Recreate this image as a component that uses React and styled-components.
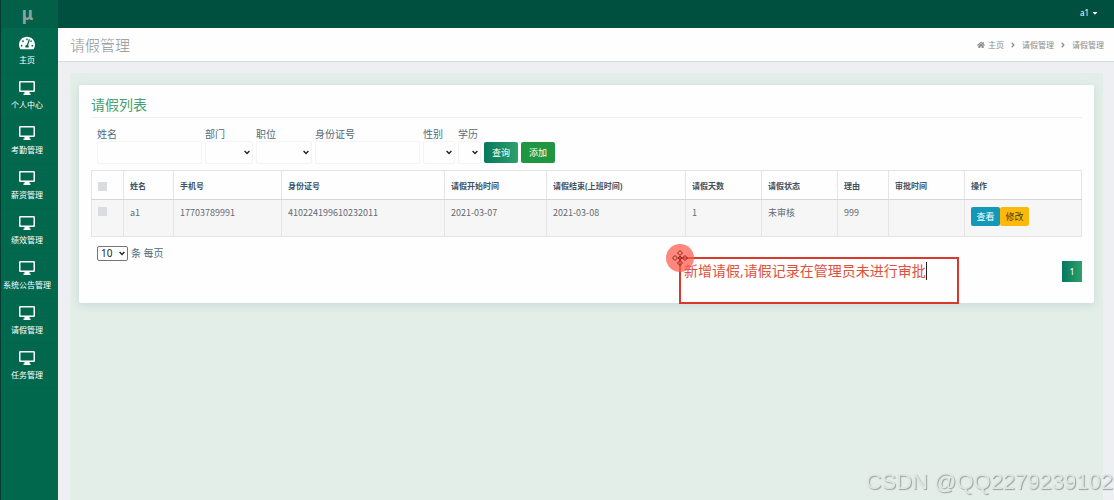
import React from "react";
import styled, { createGlobalStyle, css } from "styled-components";
import { FaTachometerAlt, FaHome, FaAngleRight, FaCaretDown } from "react-icons/fa";

const GlobalStyle = createGlobalStyle`
  * { box-sizing: border-box; }
  html, body, #root { min-height: 100vh; }
  body {
    margin: 0;
    background: #edeff2;
    color: #56697a;
    font-family: "Noto Sans", "Noto Sans CJK SC", sans-serif;
    font-size: 9px;
    line-height: 12px;
    overflow: hidden;
  }
  button, input, select { font: inherit; color: inherit; margin: 0; }
  a { color: inherit; text-decoration: none; }
`;

const Shell = styled.div`
  display: grid;
  grid-template-columns: 58px minmax(0, 1fr);
  height: 100vh;
`;

const Sidebar = styled.aside`
  background: #02684d;
  border-left: 1px solid #063d30;
  color: #fff;
`;

const Logo = styled.a`
  display: block;
  height: 28px;
  padding-right: 4px;
  background: #025f48;
  color: #8fa39b;
  font-size: 17px;
  font-weight: 700;
  line-height: 28px;
  text-align: center;
`;

const Menu = styled.ul`
  list-style: none;
  margin: 0;
  padding: 1px 0 0;
`;

const MenuLink = styled.a`
  display: flex;
  flex-direction: column;
  align-items: center;
  height: 45px;
  padding: 6px 5px 0 0;
  border-bottom: 1px solid #05634a;
  font-size: 8px;
  line-height: 12px;
  white-space: nowrap;

  svg { width: 16px; height: 16px; margin-bottom: 3px; }
`;

const Main = styled.div`
  display: flex;
  flex-direction: column;
  min-width: 0;
`;

const TopBar = styled.header`
  display: flex;
  justify-content: flex-end;
  align-items: center;
  flex: none;
  height: 28px;
  padding: 0 15px 2px 0;
  background: #00503f;
`;

const UserButton = styled.button`
  display: flex;
  align-items: center;
  gap: 2px;
  padding: 0;
  border: 0;
  background: none;
  color: #fff;
  font-size: 8px;
  line-height: 12px;
`;

const TitleBar = styled.div`
  display: flex;
  justify-content: space-between;
  align-items: center;
  flex: none;
  height: 34px;
  padding: 0 10px 0 12px;
  background: #fdfefd;
  border-bottom: 1px solid #d8dbde;
`;

const PageTitle = styled.h1`
  margin: 0;
  color: #929595;
  font-size: 15px;
  font-weight: 300;
  line-height: 20px;
`;

const Crumbs = styled.nav`
  display: flex;
  align-items: center;
  gap: 7px;
  color: #8b8d8e;
  font-size: 8px;

  a { display: flex; align-items: center; gap: 3px; }
  > svg { width: 4px; }
`;

const Content = styled.main`
  flex: 1;
  margin: 11px 11px 0 12px;
  padding: 12px 9px 0;
  background: #e3eee8;
`;

const Card = styled.section`
  position: relative;
  padding: 12px 12px 21px;
  border-radius: 2px;
  background: #fdfefd;
  box-shadow: 0 2px 8px rgba(90, 140, 150, 0.2);
`;

const CardTitle = styled.h2`
  margin: 0 0 9px;
  padding-bottom: 4px;
  border-bottom: 1px solid #eeefef;
  color: #46a074;
  font-size: 14px;
  font-weight: 400;
  line-height: 16px;
`;

const Filters = styled.form`
  display: flex;
  align-items: flex-end;
  gap: 3px;
  margin-bottom: 6px;
  padding-left: 6px;
`;

const Field = styled.label`
  display: flex;
  flex-direction: column;
  width: ${(p) => p.$width}px;
  font-size: 10px;
  line-height: 14px;
  white-space: nowrap;
`;

const control = css`
  width: 100%;
  height: 23px;
  border: 1px solid #f3f4f4;
  border-radius: 2px;
  background: #fdfefd;
`;

const TextInput = styled.input`
  ${control}
  padding: 0 4px;
`;

const SelectWrap = styled.span`
  display: grid;
  align-items: center;
  justify-items: end;

  > * { grid-area: 1 / 1; }
  svg { width: 6px; height: 5px; margin-right: 3px; pointer-events: none; }
`;

const SelectBox = styled.select`
  ${control}
  appearance: none;
  padding: 0 4px;
`;

const PageSelect = styled.select`
  appearance: none;
  width: 31px;
  height: 15px;
  padding: 0 3px;
  border: 1px solid #767676;
  border-radius: 2px;
  background: #fff;
  color: #222;
  font-size: 10px;
  line-height: 13px;
`;

const Button = styled.button`
  height: 21px;
  width: 34px;
  margin: 0 0 1px;
  padding: 0;
  border: 0;
  border-radius: 2px;
  background: ${(p) => (p.$primary ? "linear-gradient(90deg, #04795c, #2f9f6c)" : "#1f9742")};
  color: #fff;
`;

const Table = styled.table`
  width: 100%;
  border-collapse: collapse;
  table-layout: fixed;

  th, td {
    padding: 0 6px;
    border: 1px solid #e3e5e7;
    text-align: left;
    white-space: nowrap;
  }
  th {
    height: 29px;
    padding-top: 2px;
    border-bottom-color: #d3d6d9;
    color: #3f5363;
    font-size: 8px;
    font-weight: 700;
  }
  td {
    height: 37px;
    padding-top: 7px;
    vertical-align: top;
    color: #626b72;
    background: #f6f6f6;
    font-family: "Noto Sans CJK SC", sans-serif;
  }
`;

const Tick = styled.input`
  appearance: none;
  display: block;
  width: 9px;
  height: 9px;
  background: #dadce2;
`;

const Actions = styled.div`
  display: flex;
`;

const RowButton = styled.button`
  width: 29px;
  height: 19px;
  padding: 0;
  border: 0;
  border-radius: 2px;
  background: ${(p) => (p.$edit ? "#fdb90b" : "#1498b8")};
  color: ${(p) => (p.$edit ? "#4b3c12" : "#fff")};
`;

const Footer = styled.div`
  display: flex;
  justify-content: space-between;
  align-items: flex-start;
  padding: 8px 0 0 6px;
`;

const PageSize = styled.label`
  display: flex;
  align-items: center;
  gap: 3px;
  font-size: 10px;
  line-height: 16px;
`;

const PageButton = styled.button`
  width: 20px;
  height: 21px;
  margin-top: 16px;
  padding: 0;
  border: 0;
  background: linear-gradient(90deg, #04795c, #2f9f6c);
  color: #fff;
`;

const Note = styled.div`
  position: absolute;
  top: 172px;
  right: 135px;
  width: 280px;
  height: 47px;
  padding: 2px 0 0 3px;
  border: 2px solid #d8392c;
  color: #e0503c;
  font-size: 14px;
  line-height: 20px;
  white-space: nowrap;

  span { display: inline-block; height: 18px; border-right: 1px solid #222; line-height: 18px; }
  svg { position: absolute; top: -16px; left: -16px; }
`;

const Watermark = styled.div`
  position: fixed;
  right: 1px;
  bottom: 5px;
  color: #dfe6e3;
  font-family: "Liberation Sans", sans-serif;
  font-size: 22px;
  line-height: 26px;
  text-shadow: 1px 1px 1px #98a29e;
`;

const menu = ["主页", "个人中心", "考勤管理", "薪资管理", "绩效管理", "系统公告管理", "请假管理", "任务管理"];

const filters = [
  { label: "姓名", width: 105 },
  { label: "部门", width: 48, select: true },
  { label: "职位", width: 56, select: true },
  { label: "身份证号", width: 105 },
  { label: "性别", width: 32, select: true },
  { label: "学历", width: 23, select: true },
];

const columns = [
  { title: "姓名", width: 50 },
  { title: "手机号", width: 108 },
  { title: "身份证号", width: 163 },
  { title: "请假开始时间", width: 102 },
  { title: "请假结束(上班时间)", width: 139 },
  { title: "请假天数", width: 76 },
  { title: "请假状态", width: 76 },
  { title: "理由", width: 51 },
  { title: "审批时间", width: 76 },
  { title: "操作" },
];

const rows = [["a1", "17703789991", "410224199610232011", "2021-03-07", "2021-03-08", "1", "未审核", "999", ""]];

function MonitorIcon() {
  return (
    <svg viewBox="0 0 16 16" aria-hidden="true">
      <path
        fill="currentColor"
        fillRule="evenodd"
        d="M1.3 1h13.4Q16 1 16 2.3v8.4q0 1.3-1.3 1.3H10.500v1.500H11.500V15h-7v-1.500h1V12H1.300Q0 12 0 10.700V2.300Q0 1 1.300 1zM1.500 2.500v8h13v-8z"
      />
    </svg>
  );
}

function Chevron() {
  return (
    <svg viewBox="0 0 6 5" aria-hidden="true">
      <path d="M0.600 1l2.400 2.500L5.400 1" fill="none" stroke="#222" strokeWidth="1.400" />
    </svg>
  );
}

function MoveMarker() {
  return (
    <svg width="30" height="30" viewBox="0 0 30 30" aria-hidden="true">
      <circle cx="15" cy="15" r="14" fill="#ff5a4c" fillOpacity="0.72" />
      <g fill="none" stroke="#8f1f1c" strokeWidth="1">
        <path d="M15 7.500l2.500 2.500-2.500 2.500-2.500-2.500z" />
        <path d="M15 17.500l2.500 2.500-2.500 2.500-2.500-2.500z" />
        <path d="M10 12.500l2.500 2.500-2.500 2.500L7.500 15z" />
        <path d="M20 12.500l2.500 2.500-2.500 2.500-2.500-2.500z" />
        <circle cx="15" cy="15" r="1.500" />
      </g>
    </svg>
  );
}

export default function App() {
  return (
    <>
      <GlobalStyle />
      <Shell>
        <Sidebar>
          <Logo href="#">μ</Logo>
          <Menu>
            {menu.map((name, i) => (
              <li key={name}>
                <MenuLink href="#">
                  {i === 0 ? <FaTachometerAlt /> : <MonitorIcon />}
                  {name}
                </MenuLink>
              </li>
            ))}
          </Menu>
        </Sidebar>
        <Main>
          <TopBar>
            <UserButton type="button">
              a1 <FaCaretDown />
            </UserButton>
          </TopBar>
          <TitleBar>
            <PageTitle>请假管理</PageTitle>
            <Crumbs>
              <a href="#"><FaHome />主页</a>
              <FaAngleRight />
              <a href="#">请假管理</a>
              <FaAngleRight />
              <span>请假管理</span>
            </Crumbs>
          </TitleBar>
          <Content>
            <Card>
              <CardTitle>请假列表</CardTitle>
              <Filters onSubmit={(e) => e.preventDefault()}>
                {filters.map((f) => (
                  <Field key={f.label} $width={f.width}>
                    {f.label}
                    {f.select ? (
                      <SelectWrap>
                        <SelectBox><option value="" /></SelectBox>
                        <Chevron />
                      </SelectWrap>
                    ) : (
                      <TextInput type="text" />
                    )}
                  </Field>
                ))}
                <Button $primary type="submit">查询</Button>
                <Button type="button">添加</Button>
              </Filters>
              <Table>
                <colgroup>
                  <col width="32" />
                  {columns.map((c) => <col key={c.title} width={c.width} />)}
                </colgroup>
                <thead>
                  <tr>
                    <th><Tick type="checkbox" aria-label="全选" /></th>
                    {columns.map((c) => <th key={c.title}>{c.title}</th>)}
                  </tr>
                </thead>
                <tbody>
                  {rows.map((row) => (
                    <tr key={row[1]}>
                      <td><Tick type="checkbox" aria-label={row[0]} /></td>
                      {row.map((cell, i) => <td key={i}>{cell}</td>)}
                      <td>
                        <Actions>
                          <RowButton type="button">查看</RowButton>
                          <RowButton $edit type="button">修改</RowButton>
                        </Actions>
                      </td>
                    </tr>
                  ))}
                </tbody>
              </Table>
              <Footer>
                <PageSize>
                  <SelectWrap>
                    <PageSelect defaultValue="10"><option>10</option></PageSelect>
                    <Chevron />
                  </SelectWrap>
                  条 每页
                </PageSize>
                <PageButton type="button">1</PageButton>
              </Footer>
              <Note>
                <span>新增请假,请假记录在管理员未进行审批</span>
                <MoveMarker />
              </Note>
            </Card>
          </Content>
        </Main>
      </Shell>
      <Watermark>CSDN @QQ2279239102</Watermark>
    </>
  );
}
